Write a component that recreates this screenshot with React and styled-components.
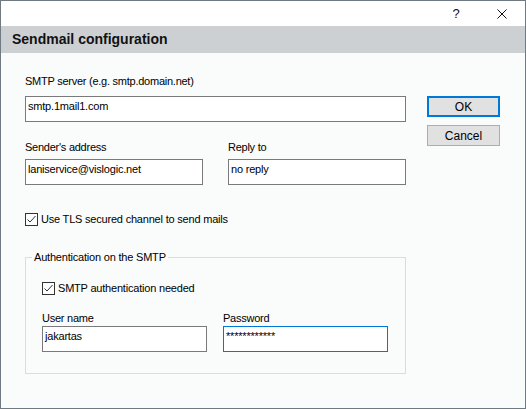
import React from 'react';
import styled, { createGlobalStyle } from 'styled-components';

const GlobalStyle = createGlobalStyle`
  body {
    margin: 0;
    font-family: "Liberation Sans", Arial, sans-serif;
    font-size: 11px;
    color: #000;
  }
`;

const Window = styled.div`
  width: 526px;
  height: 409px;
  box-sizing: border-box;
  border: 1px solid #6f7a83;
  background: #fafbfb;
  display: flex;
  flex-direction: column;
`;

const TitleBar = styled.div`
  height: 25px;
  background: #fff;
  display: flex;
  justify-content: flex-end;
`;

const CaptionButton = styled.div`
  width: 46px;
  height: 25px;
  display: flex;
  align-items: center;
  justify-content: center;
  font-size: 13px;
  color: #111;
`;

const Header = styled.div`
  height: 27px;
  line-height: 27px;
  background: #cdd0d3;
  padding-left: 11px;
  font-size: 14px;
  font-weight: bold;
  color: #111;
`;

const Body = styled.div`
  flex: 1;
  display: flex;
  gap: 21px;
  padding: 22px 0 0 24px;
`;

const MainColumn = styled.div`
  width: 381px;
  display: flex;
  flex-direction: column;
`;

const ButtonColumn = styled.div`
  width: 73px;
  display: flex;
  flex-direction: column;
  gap: 8px;
  padding-top: 21px;
`;

const Row = styled.div`
  display: flex;
  gap: ${p => p.$gap}px;
  margin-top: ${p => p.$top || 0}px;
`;

const Field = styled.div`
  display: flex;
  flex-direction: column;
  width: ${p => (p.$width ? `${p.$width}px` : 'auto')};
  margin-top: ${p => p.$top || 0}px;
`;

const Label = styled.div`
  line-height: 13px;
  height: 13px;
  white-space: nowrap;
  letter-spacing: -0.25px;
  margin-bottom: ${p => p.$gap}px;
`;

const TextBox = styled.div`
  box-sizing: border-box;
  height: 26px;
  background: #fff;
  border: 1px solid ${p => (p.$focused ? '#0078d7' : '#7a7a7a')};
  padding: 3px 2px 0;
  line-height: 13px;
  white-space: nowrap;
  overflow: hidden;
  letter-spacing: -0.2px;
`;

const Button = styled.div`
  box-sizing: border-box;
  height: 21px;
  background: #e1e1e1;
  border: ${p => (p.$default ? '2px solid #0078d7' : '1px solid #adadad')};
  display: flex;
  align-items: center;
  justify-content: center;
  font-size: 12px;
`;

const CheckRow = styled.label`
  display: flex;
  align-items: flex-start;
  gap: 3px;
  margin-top: ${p => p.$top || 0}px;
  line-height: 13px;
  letter-spacing: -0.2px;
`;

const Box = styled.span`
  box-sizing: border-box;
  width: 13px;
  height: 13px;
  border: 1px solid #333;
  background: #fff;
  display: flex;
`;

const Group = styled.fieldset`
  margin: ${p => p.$top}px 0 0;
  padding: 0;
  border: 1px solid #dcdcdc;
  min-width: 0;
`;

const Legend = styled.legend`
  margin-left: 6px;
  padding: 0 2px;
  line-height: 13px;
  letter-spacing: -0.2px;
`;

const GroupBody = styled.div`
  padding: 18px 0 21px 16px;
  display: flex;
  flex-direction: column;
`;

function CheckBox({ children, top }) {
  return (
    <CheckRow $top={top}>
      <Box>
        <svg width="11" height="11" viewBox="0 0 11 11">
          <polyline points="1.5,5.5 4,8 9.5,2" fill="none" stroke="#333" strokeWidth="1" />
        </svg>
      </Box>
      {children}
    </CheckRow>
  );
}

export default function App() {
  return (
    <>
      <GlobalStyle />
      <Window>
        <TitleBar>
          <CaptionButton>?</CaptionButton>
          <CaptionButton>
            <svg width="10" height="10" viewBox="0 0 10 10">
              <path d="M0.5 0.5 L9.5 9.5 M9.5 0.5 L0.5 9.5" stroke="#111" strokeWidth="1" />
            </svg>
          </CaptionButton>
        </TitleBar>
        <Header>Sendmail configuration</Header>
        <Body>
          <MainColumn>
            <Field>
              <Label $gap={8}>SMTP server (e.g. smtp.domain.net)</Label>
              <TextBox>smtp.1mail1.com</TextBox>
            </Field>
            <Row $gap={25} $top={19}>
              <Field $width={178}>
                <Label $gap={5}>Sender's address</Label>
                <TextBox>laniservice@vislogic.net</TextBox>
              </Field>
              <Field $width={178}>
                <Label $gap={5}>Reply to</Label>
                <TextBox>no reply</TextBox>
              </Field>
            </Row>
            <CheckBox top={28}>Use TLS secured channel to send mails</CheckBox>
            <Group $top={25}>
              <Legend>Authentication on the SMTP</Legend>
              <GroupBody>
                <CheckBox>SMTP authentication needed</CheckBox>
                <Row $gap={16} $top={17}>
                  <Field $width={165}>
                    <Label $gap={1}>User name</Label>
                    <TextBox>jakartas</TextBox>
                  </Field>
                  <Field $width={165}>
                    <Label $gap={1}>Password</Label>
                    <TextBox $focused>************</TextBox>
                  </Field>
                </Row>
              </GroupBody>
            </Group>
          </MainColumn>
          <ButtonColumn>
            <Button $default>OK</Button>
            <Button>Cancel</Button>
          </ButtonColumn>
        </Body>
      </Window>
    </>
  );
}
